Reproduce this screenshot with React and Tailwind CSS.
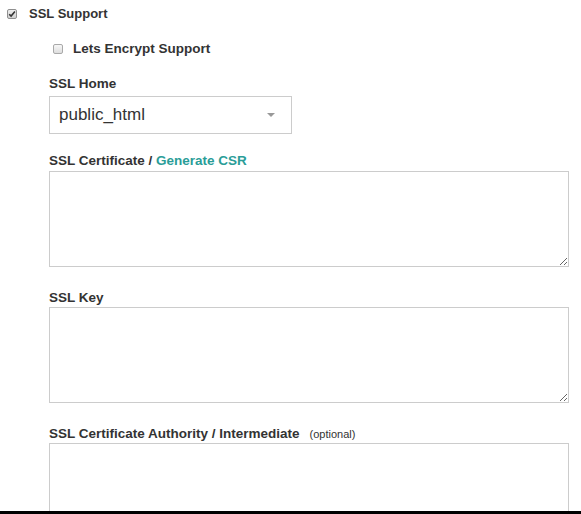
import React from 'react';

const Box = ({ checked }) => (
  <span className={`inline-flex items-center justify-center w-[10px] h-[10px] rounded-[2px] border ${checked ? 'border-[#8f8f8f] bg-gradient-to-b from-[#eeeeee] to-[#cfcfcf]' : 'border-[#a9a9a9] bg-gradient-to-b from-[#f7f7f7] to-[#dedede]'}`}>
    {checked && (
      <svg width="8" height="8" viewBox="0 0 8 8">
        <path d="M1.2 4.2 L3.1 6.1 L6.9 1.6" fill="none" stroke="#333" strokeWidth="1.6" />
      </svg>
    )}
  </span>
);

const Label = ({ children, className = '' }) => (
  <div className={`text-[13.5px] leading-[15px] font-bold text-[#333] ${className}`}>{children}</div>
);

export default function App() {
  return (
    <div className="w-[581px] h-[514px] bg-white flex flex-col" style={{ fontFamily: '"Liberation Sans", Arial, sans-serif' }}>
      <div className="h-[511px] overflow-hidden">
        {/* SSL support toggle */}
        <div className="h-[28px] flex items-center pl-[7px] gap-[12px]">
          <Box checked />
          <span className="text-[13px] font-bold text-[#333]">SSL Support</span>
        </div>
        <div className="h-[28px] mt-[7px] flex items-center pl-[53px] gap-[10px]">
          <Box />
          <span className="text-[13.5px] font-bold text-[#333]">Lets Encrypt Support</span>
        </div>

        <div className="pl-[49px]">
          <Label className="mt-[13px]">SSL Home</Label>
          <div className="mt-[5px] w-[243px] h-[38px] border border-[#cccccc] flex items-center justify-between pl-[9px] pr-[16px]">
            <span className="text-[17px] text-[#333]">public_html</span>
            <span className="w-0 h-0 border-l-[4px] border-r-[4px] border-t-[4px] border-l-transparent border-r-transparent border-t-[#999]" />
          </div>

          <Label className="mt-[19px]">
            SSL Certificate / <span className="text-[#2a9d98]">Generate CSR</span>
          </Label>
          <textarea className="block mt-[3px] w-[520px] h-[96px] border border-[#cccccc] outline-none" />

          <Label className="mt-[23px]">SSL Key</Label>
          <textarea className="block mt-[2px] w-[520px] h-[96px] border border-[#cccccc] outline-none" />

          <Label className="mt-[23px] flex items-baseline">
            SSL Certificate Authority / Intermediate
            <span className="ml-[10px] text-[11px] font-normal">(optional)</span>
          </Label>
          <textarea className="block mt-[1px] w-[520px] h-[96px] border border-[#cccccc] outline-none" />
        </div>
      </div>
      <div className="h-[3px] bg-black" />
    </div>
  );
}
